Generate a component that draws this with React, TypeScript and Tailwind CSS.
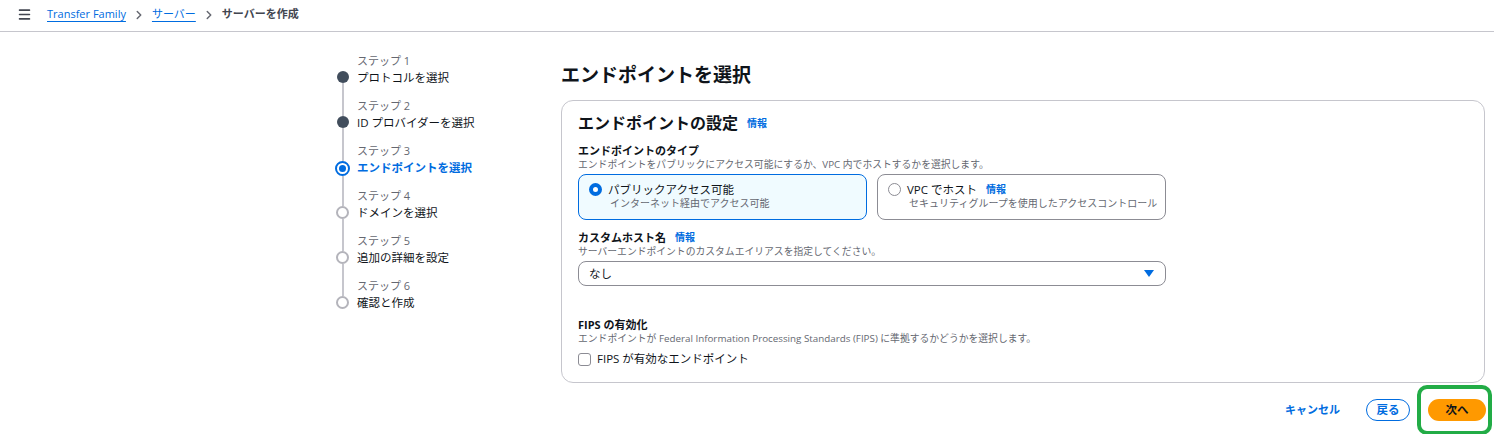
import { Menu, ChevronRight } from "lucide-react";

const steps = [
  { label: "ステップ 1", name: "プロトコルを選択", state: "done" },
  { label: "ステップ 2", name: "ID プロバイダーを選択", state: "done" },
  { label: "ステップ 3", name: "エンドポイントを選択", state: "current" },
  { label: "ステップ 4", name: "ドメインを選択", state: "todo" },
  { label: "ステップ 5", name: "追加の詳細を設定", state: "todo" },
  { label: "ステップ 6", name: "確認と作成", state: "todo" },
];

function StepDot({ state }: { state: string }) {
  if (state === "done") return <div className="h-[12px] w-[12px] shrink-0 rounded-full bg-[#414d5c]" />;
  if (state === "current")
    return (
      <div className="flex h-[15px] w-[15px] shrink-0 items-center justify-center rounded-full border-2 border-[#006ce0] bg-white">
        <div className="h-[7px] w-[7px] rounded-full bg-[#006ce0]" />
      </div>
    );
  return <div className="h-[13px] w-[13px] shrink-0 rounded-full border-2 border-[#b4b4bb] bg-white" />;
}

function Info() {
  return <span className="ml-[9px] text-[10px] font-bold text-[#006ce0]">情報</span>;
}

export default function App() {
  return (
    <div className="min-h-[434px] bg-white text-[#0f141a]" style={{ fontFamily: '"Open Sans", "Noto Sans CJK JP", sans-serif' }}>
      {/* breadcrumb */}
      <div className="flex h-[32px] items-center border-b border-[#c6c6cd] pl-[17px] pb-[2px] text-[11px]">
        <Menu className="h-[15px] w-[15px] text-[#424650]" strokeWidth={2.5} />
        <a className="ml-[15px] text-[#006ce0] underline underline-offset-[3px]">Transfer Family</a>
        <ChevronRight className="mx-[6px] h-[14px] w-[14px] text-[#656871]" strokeWidth={2.5} />
        <a className="text-[#006ce0] underline underline-offset-[3px]">サーバー</a>
        <ChevronRight className="mx-[6px] h-[14px] w-[14px] text-[#656871]" strokeWidth={2.5} />
        <span className="font-bold text-[#424650]">サーバーを作成</span>
      </div>

      <div className="flex pl-[335px] pr-[9px] pt-[21px]">
        {/* steps */}
        <div className="w-[226px] shrink-0">
          {steps.map((s, i) => (
            <div key={i} className="flex h-[45px]">
              <div className="flex w-[15px] flex-col items-center">
                <div className={`h-[18px] w-[2px] ${i === 0 ? "" : "bg-[#c6c6cd]"}`} />
                <StepDot state={s.state} />
                <div className={`w-[2px] flex-1 ${i === steps.length - 1 ? "" : "bg-[#c6c6cd]"}`} />
              </div>
              <div className="ml-[7px]">
                <div className="text-[11px] leading-[16px] text-[#656871]">{s.label}</div>
                <div className={`text-[11.5px] leading-[17px] ${s.state === "current" ? "font-bold text-[#006ce0]" : "text-[#0f141a]"}`}>{s.name}</div>
              </div>
            </div>
          ))}
        </div>

        {/* main */}
        <div className="flex-1">
          <h1 className="mt-[10px] text-[19px] font-bold leading-[24px]">エンドポイントを選択</h1>
          <div className="mt-[13px] rounded-[12px] border border-[#c6c6cd] px-[16px] pb-[14px] pt-[10px]">
            <div className="flex items-center">
              <h2 className="text-[16px] font-bold leading-[24px]">エンドポイントの設定</h2>
              <Info />
            </div>

            <div className="mt-[8px] text-[11px] font-bold leading-[15px]">エンドポイントのタイプ</div>
            <div className="text-[9.8px] leading-[13px] text-[#656871]">エンドポイントをパブリックにアクセス可能にするか、VPC 内でホストするかを選択します。</div>
            <div className="mt-[3px] flex gap-[10px]">
              <div className="flex h-[46px] w-[289px] rounded-[8px] border-[1.5px] border-[#006ce0] bg-[#f0fbff] pl-[10px] pt-[7px]">
                <div className="mt-[1px] h-[13px] w-[13px] rounded-full border-[4px] border-[#006ce0] bg-white" />
                <div className="ml-[6px]">
                  <div className="text-[11.5px] leading-[15px]">パブリックアクセス可能</div>
                  <div className="ml-[2px] text-[10px] leading-[12px] text-[#656871]">インターネット経由でアクセス可能</div>
                </div>
              </div>
              <div className="flex h-[46px] w-[289px] rounded-[8px] border border-[#8c8c94] bg-white pl-[10px] pt-[7px]">
                <div className="mt-[1px] h-[13px] w-[13px] rounded-full border-[1.5px] border-[#8c8c94] bg-white" />
                <div className="ml-[6px]">
                  <div className="flex items-center text-[11.5px] leading-[15px]">
                    VPC でホスト<Info />
                  </div>
                  <div className="ml-[2px] text-[10px] leading-[12px] text-[#656871]">セキュリティグループを使用したアクセスコントロール</div>
                </div>
              </div>
            </div>

            <div className="mt-[10px] flex items-center text-[11px] font-bold leading-[15px]">
              カスタムホスト名<Info />
            </div>
            <div className="text-[9.8px] leading-[13px] text-[#656871]">サーバーエンドポイントのカスタムエイリアスを指定してください。</div>
            <div className="mt-[3px] flex h-[25px] w-[588px] items-center justify-between rounded-[8px] border border-[#8c8c94] pl-[10px] pr-[11px]">
              <span className="text-[11.5px]">なし</span>
              <svg width="10" height="7" viewBox="0 0 10 7">
                <path d="M0 0h10L5 7z" fill="#006ce0" />
              </svg>
            </div>

            <div className="mt-[31px] text-[11px] font-bold leading-[15px]">FIPS の有効化</div>
            <div className="text-[9.8px] leading-[13px] text-[#656871]">エンドポイントが Federal Information Processing Standards (FIPS) に準拠するかどうかを選択します。</div>
            <div className="mt-[5px] flex items-center">
              <div className="h-[13px] w-[13px] rounded-[3px] border-[1.5px] border-[#8c8c94]" />
              <span className="ml-[6px] text-[11.5px] leading-[18px]">FIPS が有効なエンドポイント</span>
            </div>
          </div>

          {/* actions */}
          <div className="mt-[2px] flex items-center justify-end">
            <span className="mr-[26px] text-[11px] font-bold text-[#006ce0]">キャンセル</span>
            <div className="flex h-[22px] w-[44px] items-center justify-center rounded-full border-[1.5px] border-[#006ce0] text-[11.5px] font-bold text-[#006ce0]">戻る</div>
            <div className="ml-[7px] mr-[-7px] rounded-[10px] border-[4px] border-[#22ac46] py-[10px] pl-[7px] pr-[2px]">
              <div className="flex h-[22px] w-[58px] items-center justify-center rounded-full bg-[#ff9900] text-[11.5px] font-bold text-[#0f141a]">次へ</div>
            </div>
          </div>
        </div>
      </div>
    </div>
  );
}
